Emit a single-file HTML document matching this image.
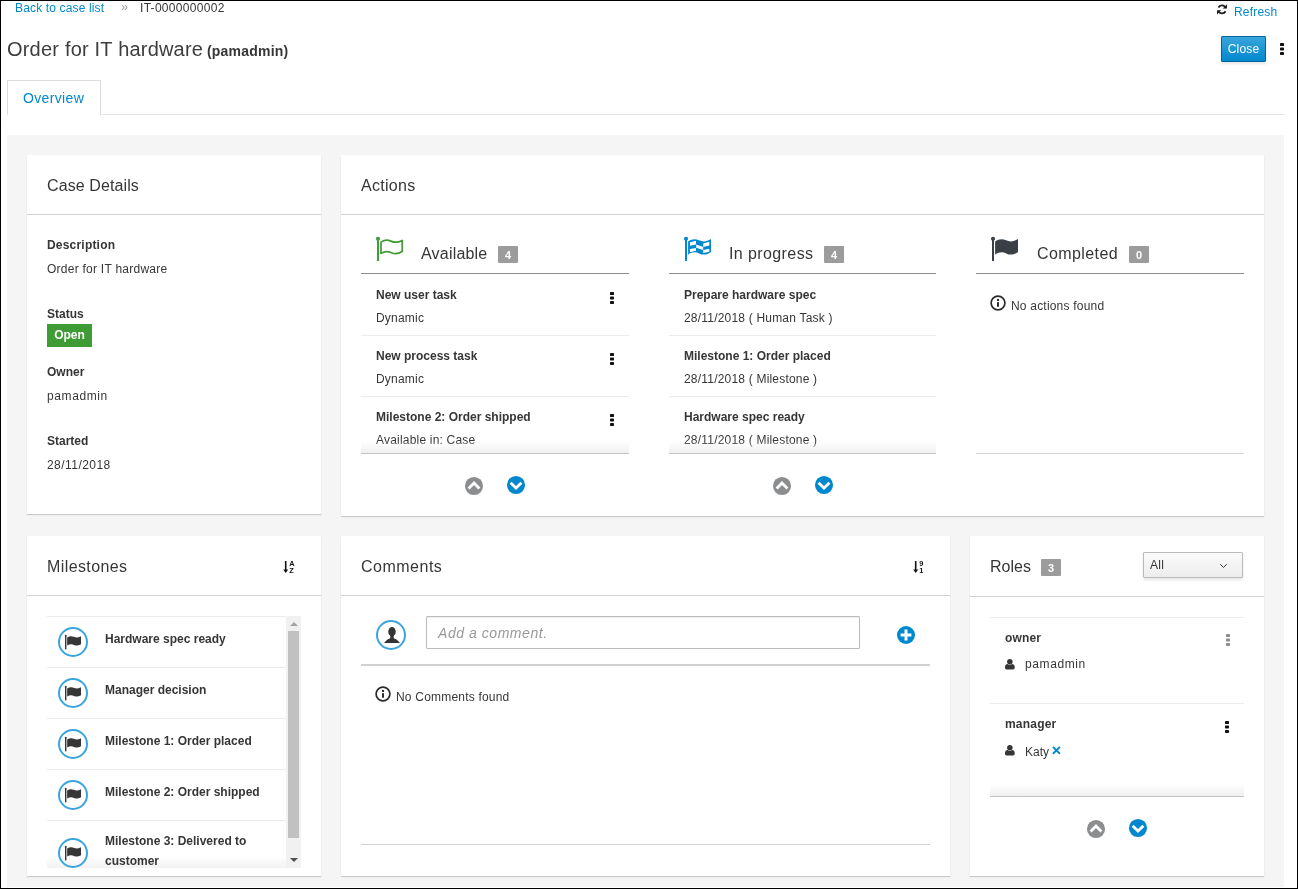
<!DOCTYPE html>
<html lang="en">
<head>
<meta charset="utf-8">
<title>Order for IT hardware</title>
<style>
*{box-sizing:border-box;margin:0;padding:0}
html,body{width:1298px;height:889px;overflow:hidden;background:#fff}
body{font-family:"Liberation Sans",sans-serif;font-size:12px;line-height:20px;color:#363636;position:relative}
#frame{position:absolute;left:0;top:0;width:1298px;height:889px;border:1px solid #000;z-index:50;pointer-events:none}
.t{position:absolute;white-space:nowrap;line-height:20px;font-size:12px}
.b{font-weight:700}
.a{color:#0088ce}
.h{font-size:16px;letter-spacing:0.1px}
.abs{position:absolute}
#gray{position:absolute;left:7px;top:135px;width:1277px;height:752px;background:#f5f5f5}
.card{position:absolute;background:#fff;box-shadow:0 1px 1px rgba(3,3,3,.175)}
.hl{position:absolute;left:0;right:0;height:1px;background:#d1d1d1}
.sep{position:absolute;height:1px;background:#ececec}
.dark{position:absolute;height:1px;background:#8b8d8f}
.badge{position:absolute;width:20px;height:17px;background:#9c9c9c;border-radius:1px;color:#fff;font-size:11px;font-weight:700;line-height:19px;text-align:center}
.fade{position:absolute;height:12px;background:linear-gradient(to bottom,rgba(255,255,255,0),#f0f0f0)}
svg{position:absolute;overflow:visible}
#root{position:absolute;left:0;top:0;width:1298px;height:889px;will-change:transform}
</style>
</head>
<body>
<div id="root">
<!-- top bar -->
<span class="t a" style="left:15px;top:-2px;letter-spacing:.15px">Back to case list</span>
<span class="t" style="left:121px;top:-3px;color:#9c9c9c;font-size:12.5px">»</span>
<span class="t" style="left:140px;top:-2px;letter-spacing:.3px">IT-0000000002</span>
<svg style="left:1217px;top:4.4px" width="10" height="10.8" viewBox="0 0 10 10.8"><path d="M8.7 4.1A4 4 0 0 0 1.4 3.5M1.3 6.7A4 4 0 0 0 8.6 7.3" fill="none" stroke="#222" stroke-width="1.9"/><path d="M10 0.3V4.6H5.7zM0 10.5V6.2H4.3z" fill="#222"/></svg>
<span class="t a" style="left:1234px;top:2px;letter-spacing:.2px">Refresh</span>
<span class="t" style="left:7px;top:34px;font-size:20px;line-height:30px;letter-spacing:.2px;color:#3d3d3d">Order for IT hardware</span>
<span class="t b" style="left:207px;top:36px;font-size:14px;line-height:30px;letter-spacing:.2px">(pamadmin)</span>
<div class="abs" style="left:1221px;top:36px;width:45px;height:26px;border:1px solid #00659c;border-radius:1px;background:linear-gradient(#39a5dc,#0088ce);box-shadow:0 2px 3px rgba(3,3,3,.1);color:#fff;text-align:center;line-height:24px;font-size:12px;letter-spacing:.2px">Close</div>
<svg style="left:1279.8px;top:42.8px" width="4" height="12" viewBox="0 0 4 12"><rect width="4" height="3.1" rx=".7" fill="#111"/><rect y="4.45" width="4" height="3.1" rx=".7" fill="#111"/><rect y="8.9" width="4" height="3.1" rx=".7" fill="#111"/></svg>
<!-- tabs -->
<div class="abs" style="left:7px;top:114px;width:1277px;height:1px;background:#e6e6e6"></div>
<div class="abs" style="left:7px;top:80px;width:94px;height:35px;border:1px solid #dcdcdc;border-bottom:none;background:#fff"></div>
<span class="t a" style="left:23px;top:88px;font-size:14px;letter-spacing:.35px">Overview</span>
<div id="gray"></div>
<!-- Case details card -->
<div class="card" style="left:27px;top:155px;width:294px;height:359px">
<span class="t h" style="left:20px;top:21px">Case Details</span>
<div class="hl" style="top:59px"></div>
<span class="t b" style="left:20px;top:80px;letter-spacing:.2px">Description</span>
<span class="t" style="left:20px;top:104px;letter-spacing:.25px">Order for IT hardware</span>
<span class="t b" style="left:20px;top:149px">Status</span>
<div class="abs" style="left:20px;top:169px;width:45px;height:23px;background:#3f9c35;color:#fff;font-weight:700;text-align:center;line-height:22px;font-size:12px">Open</div>
<span class="t b" style="left:20px;top:207px">Owner</span>
<span class="t" style="left:20px;top:231px;letter-spacing:.6px">pamadmin</span>
<span class="t b" style="left:20px;top:276px">Started</span>
<span class="t" style="left:20px;top:300px;letter-spacing:.45px">28/11/2018</span>
</div>
<!-- Actions card -->
<div class="card" style="left:341px;top:155px;width:923px;height:361px">
<span class="t h" style="left:20px;top:21px;letter-spacing:.3px">Actions</span>
<div class="hl" style="top:59px"></div>
<svg style="left:35px;top:82px" width="27" height="24" viewBox="0 0 27 24"><circle cx="2" cy="1.7" r="2.05" fill="#3f9c35"/><rect x="1" y="1.7" width="2" height="22.3" rx=".6" fill="#3f9c35"/><path d="M5 5.1C8 3.1 11.2 2.5 14.8 4.1C18.8 5.9 22 5.7 26.2 3.4V14.5C22.3 17 19 17.4 15.4 15.7C11.8 14 8.2 14.4 5 16.4Z" fill="none" stroke="#3f9c35" stroke-width="1.7" stroke-linejoin="round"/></svg>
<svg style="left:343px;top:82px" width="27" height="24" viewBox="0 0 27 24"><circle cx="2" cy="1.7" r="2.05" fill="#0088ce"/><rect x="1" y="1.7" width="2" height="22.3" rx=".6" fill="#0088ce"/><path d="M4.1 4.6C7.5 2.2 11 1.5 15 3.3C19 5.1 22.5 4.8 27 2.1V15C22.5 18 19 18.3 15.2 16.4C11.5 14.6 7.5 15.2 4.1 17.7Z" fill="#0088ce"/><path d="M5.9 5.3L12 3.8V7.4L5.9 8.8ZM19.2 6.4L25.3 4.7V8.4L19.2 10ZM12.2 7.4L19.2 10V12.9L12.2 10.8ZM5.9 12.1L12 10.9V13.8L5.9 15.3ZM19.2 12.9L25.3 11.7V14.8L19.2 16.1Z" fill="#fff"/></svg>
<svg style="left:650px;top:82px" width="27" height="24" viewBox="0 0 27 24"><circle cx="2" cy="1.7" r="2.05" fill="#393f44"/><rect x="1" y="1.7" width="2" height="22.3" rx=".6" fill="#393f44"/><path d="M4.1 4.6C7.5 2.2 11 1.5 15 3.3C19 5.1 22.5 4.8 27 2.1V15C22.5 18 19 18.3 15.2 16.4C11.5 14.6 7.5 15.2 4.1 17.7Z" fill="#393f44"/></svg>
<span class="t h" style="left:80px;top:89px;letter-spacing:0.2px">Available</span>
<div class="badge" style="left:157px;top:91px">4</div>
<span class="t h" style="left:388px;top:89px;letter-spacing:0.4px">In progress</span>
<div class="badge" style="left:483px;top:91px">4</div>
<span class="t h" style="left:696px;top:89px;letter-spacing:0.4px">Completed</span>
<div class="badge" style="left:788px;top:91px">0</div>
<div class="dark" style="left:20px;top:118px;width:268px"></div>
<div class="dark" style="left:328px;top:118px;width:267px"></div>
<div class="dark" style="left:635px;top:118px;width:268px"></div>
<span class="t b" style="left:35px;top:130px">New user task</span>
<span class="t" style="left:35px;top:153px;letter-spacing:.2px">Dynamic</span>
<div class="sep" style="left:20px;top:180px;width:268px"></div>
<svg style="left:269px;top:137px" width="4" height="12" viewBox="0 0 4 12"><rect width="4" height="3.1" rx=".7" fill="#111"/><rect y="4.45" width="4" height="3.1" rx=".7" fill="#111"/><rect y="8.9" width="4" height="3.1" rx=".7" fill="#111"/></svg>
<span class="t b" style="left:35px;top:191px">New process task</span>
<span class="t" style="left:35px;top:214px;letter-spacing:.2px">Dynamic</span>
<div class="sep" style="left:20px;top:241px;width:268px"></div>
<svg style="left:269px;top:198px" width="4" height="12" viewBox="0 0 4 12"><rect width="4" height="3.1" rx=".7" fill="#111"/><rect y="4.45" width="4" height="3.1" rx=".7" fill="#111"/><rect y="8.9" width="4" height="3.1" rx=".7" fill="#111"/></svg>
<span class="t b" style="left:35px;top:252px">Milestone 2: Order shipped</span>
<span class="t" style="left:35px;top:275px;letter-spacing:.2px">Available in: Case</span>
<svg style="left:269px;top:259px" width="4" height="12" viewBox="0 0 4 12"><rect width="4" height="3.1" rx=".7" fill="#111"/><rect y="4.45" width="4" height="3.1" rx=".7" fill="#111"/><rect y="8.9" width="4" height="3.1" rx=".7" fill="#111"/></svg>
<div class="fade" style="left:20px;top:286px;width:268px"></div>
<div class="abs" style="left:20px;top:298px;width:268px;height:1px;background:#c4c4c4"></div>
<svg style="left:124.1px;top:321.9px" width="18" height="18" viewBox="0 0 18 18"><circle cx="9" cy="9" r="9.05" fill="#8b8d8f"/><polyline points="3.6,11.4 9,6 14.4,11.4" fill="none" stroke="#fff" stroke-width="2.8"/></svg>
<svg style="left:166.1px;top:320.9px" width="18" height="18" viewBox="0 0 18 18"><circle cx="9" cy="9" r="9.05" fill="#0088ce"/><polyline points="3.6,6.7 9,12.1 14.4,6.7" fill="none" stroke="#fff" stroke-width="2.8"/></svg>
<span class="t b" style="left:343px;top:130px">Prepare hardware spec</span>
<span class="t" style="left:343px;top:153px;letter-spacing:.2px">28/11/2018 ( Human Task )</span>
<div class="sep" style="left:328px;top:180px;width:267px"></div>
<span class="t b" style="left:343px;top:191px">Milestone 1: Order placed</span>
<span class="t" style="left:343px;top:214px;letter-spacing:.2px">28/11/2018 ( Milestone )</span>
<div class="sep" style="left:328px;top:241px;width:267px"></div>
<span class="t b" style="left:343px;top:252px">Hardware spec ready</span>
<span class="t" style="left:343px;top:275px;letter-spacing:.2px">28/11/2018 ( Milestone )</span>
<div class="fade" style="left:328px;top:286px;width:267px"></div>
<div class="abs" style="left:328px;top:298px;width:267px;height:1px;background:#c4c4c4"></div>
<svg style="left:432.1px;top:321.9px" width="18" height="18" viewBox="0 0 18 18"><circle cx="9" cy="9" r="9.05" fill="#8b8d8f"/><polyline points="3.6,11.4 9,6 14.4,11.4" fill="none" stroke="#fff" stroke-width="2.8"/></svg>
<svg style="left:474.1px;top:320.9px" width="18" height="18" viewBox="0 0 18 18"><circle cx="9" cy="9" r="9.05" fill="#0088ce"/><polyline points="3.6,6.7 9,12.1 14.4,6.7" fill="none" stroke="#fff" stroke-width="2.8"/></svg>
<div class="abs" style="left:635px;top:298px;width:268px;height:1px;background:#d8d8d8"></div>
<svg style="left:649px;top:140.3px" width="16" height="16" viewBox="0 0 16 16"><circle cx="8" cy="8" r="6.9" fill="none" stroke="#2b2b2b" stroke-width="1.7"/><circle cx="8" cy="4.9" r="1.2" fill="#2b2b2b"/><rect x="7" y="7" width="2" height="4.8" rx=".4" fill="#2b2b2b"/></svg>
<span class="t" style="left:670px;top:141px;letter-spacing:.2px">No actions found</span>
</div>
<!-- Milestones card -->
<div class="card" style="left:27px;top:536px;width:294px;height:340px">
<span class="t h" style="left:20px;top:21px;letter-spacing:.4px">Milestones</span>
<div class="hl" style="top:59px"></div>
<svg style="left:256px;top:25px" width="12" height="12" viewBox="0 0 12 12"><path d="M1.9 0H3.5V8.6H5.2L2.7 12L.2 8.6H1.9Z" fill="#111"/><text x="6.3" y="5.3" font-family="Liberation Sans,sans-serif" font-size="7.4" font-weight="700" fill="#111">A</text><text x="6.3" y="12.1" font-family="Liberation Sans,sans-serif" font-size="7.4" font-weight="700" fill="#111">Z</text></svg>
<div class="abs" style="left:20px;top:80px;width:254px;height:252px;overflow:hidden">
<div class="fade" style="left:0;top:240px;width:239px;background:linear-gradient(to bottom,rgba(255,255,255,0),#f2f2f2)"></div>
<div class="sep" style="left:0px;top:0px;width:239px"></div>
<div class="abs" style="left:11px;top:11px;width:30px;height:30px;border:2px solid #39a5dc;border-radius:50%"></div>
<svg style="left:17.9px;top:18.5px" width="16.1" height="14.4" viewBox="0 0 16.1 14.4"><circle cx=".7" cy=".8" r=".95" fill="#363636"/><rect x="0" y=".8" width="1.4" height="13.6" fill="#363636"/><path d="M2.15 2.5C4.2 1.1 6.4 .8 8.8 1.8C11.2 2.8 13.2 2.6 16.05 1.2V9.2C13.4 10.7 11.3 10.9 9 9.9C6.7 8.9 4.4 9.1 2.15 10.6Z" fill="#363636"/></svg>
<span class="t b" style="left:58px;top:13px">Hardware spec ready</span>
<div class="sep" style="left:0px;top:51px;width:240px"></div>
<div class="abs" style="left:11px;top:62px;width:30px;height:30px;border:2px solid #39a5dc;border-radius:50%"></div>
<svg style="left:17.9px;top:69.5px" width="16.1" height="14.4" viewBox="0 0 16.1 14.4"><circle cx=".7" cy=".8" r=".95" fill="#363636"/><rect x="0" y=".8" width="1.4" height="13.6" fill="#363636"/><path d="M2.15 2.5C4.2 1.1 6.4 .8 8.8 1.8C11.2 2.8 13.2 2.6 16.05 1.2V9.2C13.4 10.7 11.3 10.9 9 9.9C6.7 8.9 4.4 9.1 2.15 10.6Z" fill="#363636"/></svg>
<span class="t b" style="left:58px;top:64px">Manager decision</span>
<div class="sep" style="left:0px;top:102px;width:240px"></div>
<div class="abs" style="left:11px;top:113px;width:30px;height:30px;border:2px solid #39a5dc;border-radius:50%"></div>
<svg style="left:17.9px;top:120.5px" width="16.1" height="14.4" viewBox="0 0 16.1 14.4"><circle cx=".7" cy=".8" r=".95" fill="#363636"/><rect x="0" y=".8" width="1.4" height="13.6" fill="#363636"/><path d="M2.15 2.5C4.2 1.1 6.4 .8 8.8 1.8C11.2 2.8 13.2 2.6 16.05 1.2V9.2C13.4 10.7 11.3 10.9 9 9.9C6.7 8.9 4.4 9.1 2.15 10.6Z" fill="#363636"/></svg>
<span class="t b" style="left:58px;top:115px">Milestone 1: Order placed</span>
<div class="sep" style="left:0px;top:153px;width:240px"></div>
<div class="abs" style="left:11px;top:164px;width:30px;height:30px;border:2px solid #39a5dc;border-radius:50%"></div>
<svg style="left:17.9px;top:171.5px" width="16.1" height="14.4" viewBox="0 0 16.1 14.4"><circle cx=".7" cy=".8" r=".95" fill="#363636"/><rect x="0" y=".8" width="1.4" height="13.6" fill="#363636"/><path d="M2.15 2.5C4.2 1.1 6.4 .8 8.8 1.8C11.2 2.8 13.2 2.6 16.05 1.2V9.2C13.4 10.7 11.3 10.9 9 9.9C6.7 8.9 4.4 9.1 2.15 10.6Z" fill="#363636"/></svg>
<span class="t b" style="left:58px;top:166px">Milestone 2: Order shipped</span>
<div class="sep" style="left:0px;top:204px;width:240px"></div>
<div class="abs" style="left:11px;top:222px;width:30px;height:30px;border:2px solid #39a5dc;border-radius:50%"></div>
<svg style="left:17.9px;top:229.5px" width="16.1" height="14.4" viewBox="0 0 16.1 14.4"><circle cx=".7" cy=".8" r=".95" fill="#363636"/><rect x="0" y=".8" width="1.4" height="13.6" fill="#363636"/><path d="M2.15 2.5C4.2 1.1 6.4 .8 8.8 1.8C11.2 2.8 13.2 2.6 16.05 1.2V9.2C13.4 10.7 11.3 10.9 9 9.9C6.7 8.9 4.4 9.1 2.15 10.6Z" fill="#363636"/></svg>
<span class="t b" style="left:58px;top:215px;white-space:normal;width:170px">Milestone 3: Delivered to<br>customer</span>
<div class="abs" style="left:239px;top:0px;width:15px;height:252px;background:#f1f1f1"></div>
<div class="abs" style="left:241px;top:15px;width:11px;height:207px;background:#c1c1c1"></div>
<svg style="left:243px;top:6px" width="8" height="4" viewBox="0 0 8 4"><path d="M0 4L4 0L8 4Z" fill="#a3a3a3"/></svg>
<svg style="left:243px;top:241.5px" width="8" height="4" viewBox="0 0 8 4"><path d="M0 0L4 4L8 0Z" fill="#505050"/></svg>
</div>
</div>
<!-- Comments card -->
<div class="card" style="left:341px;top:536px;width:609px;height:340px">
<span class="t h" style="left:20px;top:21px;letter-spacing:.5px">Comments</span>
<div class="hl" style="top:59px"></div>
<svg style="left:572px;top:25px" width="12" height="12" viewBox="0 0 12 12"><path d="M1.9 0H3.5V8.6H5.2L2.7 12L.2 8.6H1.9Z" fill="#111"/><text x="6.3" y="5.3" font-family="Liberation Sans,sans-serif" font-size="7.4" font-weight="700" fill="#111">9</text><text x="6.3" y="12.1" font-family="Liberation Sans,sans-serif" font-size="7.4" font-weight="700" fill="#111">1</text></svg>
<div class="abs" style="left:35px;top:84px;width:30px;height:30px;border:2px solid #39a5dc;border-radius:50%"></div>
<svg style="left:42.9px;top:91px" width="16" height="16" viewBox="0 0 16 16"><ellipse cx="8" cy="4.7" rx="3.75" ry="4.7" fill="#333"/><rect x="6.3" y="8" width="3.4" height="4" fill="#333"/><path d="M0 16C2 13.2 4.6 11.3 8 10.7C11.4 11.3 14 13.2 16 16Z" fill="#333"/></svg>
<div class="abs" style="left:85px;top:80px;width:434px;height:33px;border:1px solid #bbb;border-radius:1px;box-shadow:inset 0 1px 1px rgba(3,3,3,.075);background:#fff"></div>
<span class="t" style="left:97px;top:85px;font-size:14px;font-style:italic;color:#999;line-height:24px;letter-spacing:.55px">Add a comment.</span>
<svg style="left:556px;top:89.5px" width="18" height="18" viewBox="0 0 18 18"><circle cx="9" cy="9" r="9" fill="#0088ce"/><path d="M7.5 3.6H10.5V7.5H14.4V10.5H10.5V14.4H7.5V10.5H3.6V7.5H7.5Z" fill="#fff"/></svg>
<div class="abs" style="left:20px;top:128px;width:569px;height:2px;background:#d1d1d1"></div>
<svg style="left:34px;top:150.3px" width="16" height="16" viewBox="0 0 16 16"><circle cx="8" cy="8" r="6.9" fill="none" stroke="#2b2b2b" stroke-width="1.7"/><circle cx="8" cy="4.9" r="1.2" fill="#2b2b2b"/><rect x="7" y="7" width="2" height="4.8" rx=".4" fill="#2b2b2b"/></svg>
<span class="t" style="left:55px;top:151px;letter-spacing:.2px">No Comments found</span>
<div class="abs" style="left:20px;top:308px;width:569px;height:1px;background:#d1d1d1"></div>
</div>
<!-- Roles card -->
<div class="card" style="left:970px;top:536px;width:294px;height:340px">
<span class="t h" style="left:20px;top:21px;letter-spacing:0">Roles</span>
<div class="hl" style="top:60px"></div>
<div class="badge" style="left:71px;top:23px">3</div>
<div class="abs" style="left:173px;top:16px;width:100px;height:26px;border:1px solid #bbb;border-radius:1px;background:linear-gradient(#fafafa,#ededed);box-shadow:0 2px 3px rgba(3,3,3,.1)"></div>
<span class="t" style="left:180px;top:19px;letter-spacing:.3px">All</span>
<svg style="left:250px;top:28px" width="7" height="4" viewBox="0 0 7 4"><polyline points="0.3,0.3 3.5,3.4 6.7,0.3" fill="none" stroke="#363636" stroke-width="1"/></svg>
<div class="sep" style="left:20px;top:81px;width:254px"></div>
<span class="t b" style="left:35px;top:92px;letter-spacing:.15px">owner</span>
<svg style="left:256px;top:98px" width="4" height="12" viewBox="0 0 4 12"><rect width="4" height="3.1" rx=".7" fill="#8b8d8f"/><rect y="4.45" width="4" height="3.1" rx=".7" fill="#8b8d8f"/><rect y="8.9" width="4" height="3.1" rx=".7" fill="#8b8d8f"/></svg>
<svg style="left:34.9px;top:122.7px" width="9.7" height="10.4" viewBox="0 0 9.7 10.4"><circle cx="4.85" cy="2.8" r="2.75" fill="#363636"/><path d="M1.6 10.4C.6 10.4 0 9.8 0 9V7.8C0 6 1.1 5 2.8 4.9C4 6.1 5.7 6.1 6.9 4.9C8.6 5 9.7 6 9.7 7.8V9C9.7 9.8 9.1 10.4 8.1 10.4Z" fill="#363636"/></svg>
<span class="t" style="left:55px;top:118px;letter-spacing:.6px">pamadmin</span>
<div class="sep" style="left:20px;top:167px;width:254px"></div>
<span class="t b" style="left:35px;top:178px;letter-spacing:.2px">manager</span>
<svg style="left:254.5px;top:185px" width="4" height="12" viewBox="0 0 4 12"><rect width="4" height="3.1" rx=".7" fill="#111"/><rect y="4.45" width="4" height="3.1" rx=".7" fill="#111"/><rect y="8.9" width="4" height="3.1" rx=".7" fill="#111"/></svg>
<svg style="left:34.9px;top:208.5px" width="9.7" height="10.4" viewBox="0 0 9.7 10.4"><circle cx="4.85" cy="2.8" r="2.75" fill="#363636"/><path d="M1.6 10.4C.6 10.4 0 9.8 0 9V7.8C0 6 1.1 5 2.8 4.9C4 6.1 5.7 6.1 6.9 4.9C8.6 5 9.7 6 9.7 7.8V9C9.7 9.8 9.1 10.4 8.1 10.4Z" fill="#363636"/></svg>
<span class="t" style="left:55px;top:205.5px;letter-spacing:0">Katy</span>
<svg style="left:82px;top:210.3px" width="8.8" height="8.6" viewBox="0 0 8.8 8.6"><path d="M.9 .9L7.9 7.7M7.9 .9L.9 7.7" stroke="#0088ce" stroke-width="1.9" fill="none"/></svg>
<div class="fade" style="left:20px;top:248px;width:254px"></div>
<div class="abs" style="left:20px;top:260px;width:254px;height:1px;background:#c4c4c4"></div>
<svg style="left:117px;top:283.5px" width="18" height="18" viewBox="0 0 18 18"><circle cx="9" cy="9" r="9.05" fill="#8b8d8f"/><polyline points="3.6,11.4 9,6 14.4,11.4" fill="none" stroke="#fff" stroke-width="2.8"/></svg>
<svg style="left:159px;top:283px" width="18" height="18" viewBox="0 0 18 18"><circle cx="9" cy="9" r="9.05" fill="#0088ce"/><polyline points="3.6,6.7 9,12.1 14.4,6.7" fill="none" stroke="#fff" stroke-width="2.8"/></svg>
</div>
</div>
<div id="frame"></div>
</body>
</html>
